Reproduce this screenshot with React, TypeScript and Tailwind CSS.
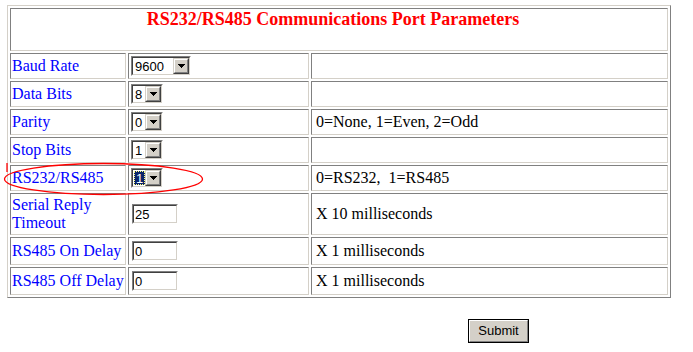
import React from 'react'

const cell =
  'border border-t-[#808080] border-l-[#808080] border-r-[#d4d0c8] border-b-[#d4d0c8] p-px align-middle leading-[18px]'

const Arrow = () => (
  <svg width="7" height="4" viewBox="0 0 7 4" shapeRendering="crispEdges">
    <rect x="0" y="0" width="7" height="1" fill="#000" />
    <rect x="1" y="1" width="5" height="1" fill="#000" />
    <rect x="2" y="2" width="3" height="1" fill="#000" />
    <rect x="3" y="3" width="1" height="1" fill="#000" />
  </svg>
)

const Combo = ({ value, wide, focused }: { value: string; wide?: boolean; focused?: boolean }) => (
  <div
    className={`${wide ? 'w-[60px]' : 'w-[32px]'} h-[20px] border border-t-[#808080] border-l-[#808080] border-r-white border-b-white`}>
    <div className="flex h-full border border-t-[#404040] border-l-[#404040] border-r-[#d4d0c8] border-b-[#d4d0c8] bg-white">
      <div className="flex flex-1 items-center pl-px font-['Liberation_Sans',sans-serif] text-[13px] leading-none">
        {focused ? (
          <span className="flex h-[14px] items-center border border-dotted border-[#ffff80] bg-[#0a246a] px-px text-white">
            {value}
          </span>
        ) : (
          <span className="pl-px">{value}</span>
        )}
      </div>
      <div className="h-full w-[16px] border border-t-[#d4d0c8] border-l-[#d4d0c8] border-r-[#404040] border-b-[#404040]">
        <div className="flex h-full items-center justify-center border border-t-white border-l-white border-r-[#808080] border-b-[#808080] bg-[#d4d0c8]">
          <Arrow />
        </div>
      </div>
    </div>
  </div>
)

const TextBox = ({ value }: { value: string }) => (
  <div className="ml-px h-[20px] w-[46px] border border-t-[#808080] border-l-[#808080] border-r-white border-b-white">
    <div className="flex h-full items-center border border-t-[#404040] border-l-[#404040] border-r-[#d4d0c8] border-b-[#d4d0c8] bg-white pl-px font-['Liberation_Sans',sans-serif] text-[13px] leading-none">
      {value}
    </div>
  </div>
)

type Row = { label: string; control: React.ReactNode; note?: string; tall?: 'input' | 'double' }

const rows: Row[] = [
  { label: 'Baud Rate', control: <Combo value="9600" wide /> },
  { label: 'Data Bits', control: <Combo value="8" /> },
  { label: 'Parity', control: <Combo value="0" />, note: '0=None, 1=Even, 2=Odd' },
  { label: 'Stop Bits', control: <Combo value="1" /> },
  { label: 'RS232/RS485', control: <Combo value="1" focused />, note: '0=RS232,\u00a0 1=RS485' },
  { label: 'Serial Reply Timeout', control: <TextBox value="25" />, note: 'X 10 milliseconds', tall: 'double' },
  { label: 'RS485 On Delay', control: <TextBox value="0" />, note: 'X 1 milliseconds', tall: 'input' },
  { label: 'RS485 Off Delay', control: <TextBox value="0" />, note: 'X 1 milliseconds', tall: 'input' },
]

export default function App() {
  return (
    <div className="relative h-[352px] w-[693px] bg-white font-['Liberation_Serif',serif] text-black">
      <div className="pl-[7px] pt-[5px]">
        <table className="w-[664px] table-fixed border-separate border-spacing-[2px] border border-t-[#d4d0c8] border-l-[#d4d0c8] border-r-[#808080] border-b-[#808080]">
          <colgroup>
            <col className="w-[116px]" />
            <col className="w-[181px]" />
            <col className="w-[357px]" />
          </colgroup>
          <tbody>
            <tr>
              <td colSpan={3} className={`${cell} h-[43px] !align-top text-center`}>
                <div className="pr-[12px] font-['Liberation_Serif','Times_New_Roman',serif] text-[18px] font-bold leading-[18px] text-[#ff0000]">
                  RS232/RS485 Communications Port Parameters
                </div>
              </td>
            </tr>
            {rows.map((r) => (
              <tr key={r.label}>
                <td
                  className={`${cell} text-[16px] text-[#0000ff] ${
                    r.tall === 'double' ? 'h-[42px]' : r.tall === 'input' ? 'h-[28px]' : 'h-[26px]'
                  }`}>
                  {r.label}
                </td>
                <td className={`${cell} pl-[2px]`}>{r.control}</td>
                <td className={`${cell} pl-[4px] text-[16px]`}>{r.note ?? '\u00a0'}</td>
              </tr>
            ))}
          </tbody>
        </table>
      </div>

      <div className="pl-[468px] pt-[20px]">
        <button className="h-[24px] w-[61px] border border-black bg-[#d4d0c8] p-0">
          <div className="flex h-full items-center justify-center border border-t-white border-l-white border-r-[#808080] border-b-[#808080] font-['Liberation_Sans',sans-serif] text-[13px]">
            Submit
          </div>
        </button>
      </div>

      <svg className="pointer-events-none absolute left-0 top-0" width="693" height="352">
        <ellipse cx="103.5" cy="179" rx="99" ry="15.5" fill="none" stroke="#ff0000" strokeWidth="1.3" />
        <line x1="7" y1="163" x2="7" y2="172" stroke="#ff0000" strokeWidth="1.3" />
      </svg>
    </div>
  )
}
